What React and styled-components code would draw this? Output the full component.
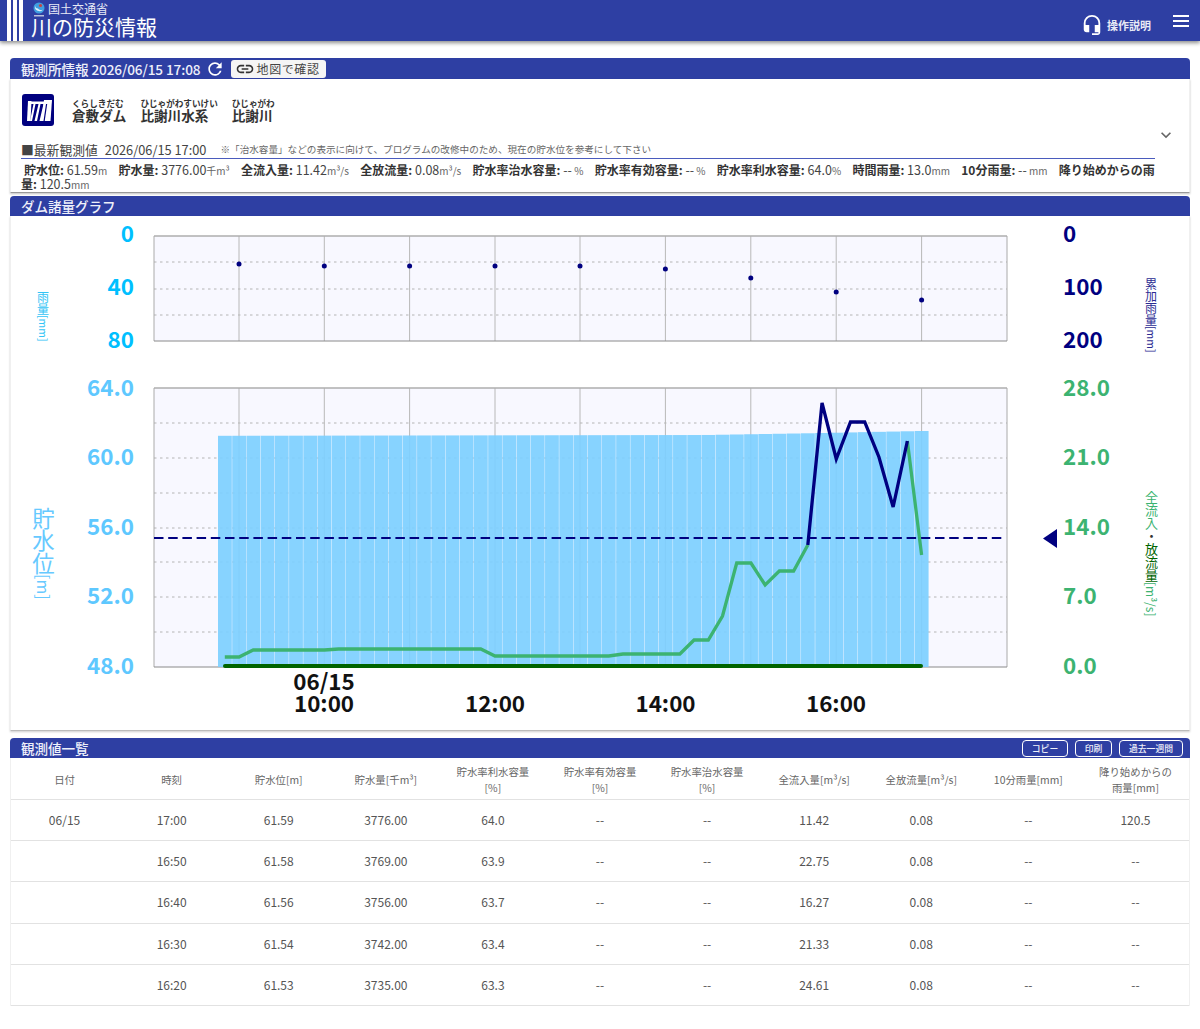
import React from "react";
import styled, { createGlobalStyle } from "styled-components";
import { MdHeadsetMic, MdRefresh, MdLink, MdExpandMore } from "react-icons/md";

const GlobalStyle = createGlobalStyle`
  html, body {
    margin: 0;
    padding: 0;
    background: #fff;
    height: 100%;
    overflow: hidden;
    font-family: "Noto Sans CJK JP", "Noto Sans", sans-serif;
  }
`;

const BLUE = "#2e3fa3";

const TopBar = styled.header`
  height: 41px;
  background: ${BLUE};
  box-shadow: 0 2px 4px rgba(0, 0, 0, 0.45);
  display: flex;
  align-items: stretch;
  color: #fff;
`;
const Stripes = styled.div`
  display: flex;
  gap: 2px;
  padding-left: 7px;
  span {
    width: 4px;
    background: #fff;
  }
`;
const Brand = styled.div`
  margin-left: 8px;
  display: flex;
  flex-direction: column;
  flex: 1;
`;
const Ministry = styled.div`
  display: flex;
  align-items: center;
  gap: 3px;
  height: 14px;
  padding: 2px 0 0 2px;
  font-size: 12px;
  line-height: 14px;
  color: #e8eaf6;
`;
const SiteName = styled.div`
  font-size: 21px;
  line-height: 21px;
  font-weight: 400;
`;
const HelpLink = styled.div`
  display: flex;
  align-items: center;
  gap: 4px;
  padding-top: 8px;
  font-size: 11px;
  font-weight: 700;
  color: #e8eaf6;
`;
const MenuButton = styled.div`
  display: flex;
  flex-direction: column;
  gap: 3.5px;
  width: 16px;
  margin: 15px 11px 0 22px;
  span {
    height: 1.5px;
    background: #fff;
  }
`;

const Main = styled.main`
  padding: 17px 10px 0;
`;
const SectionBar = styled.div`
  height: ${(p) => p.$height || 20}px;
  background: ${BLUE};
  border-radius: 4px 4px 0 0;
  display: flex;
  align-items: center;
  padding: 0 7px 0 11px;
  color: #fff;
`;
const BarTitle = styled.h2`
  margin: 0;
  font-size: 13.6px;
  font-weight: 500;
  letter-spacing: -0.1px;
  line-height: 20px;
  color: #eef0fa;
`;
const Refresh = styled(MdRefresh)`
  margin-left: 4px;
`;
const MapButton = styled.button`
  margin-left: 6px;
  height: 18px;
  width: 95px;
  border: 0;
  padding: 0 0 0 4px;
  border-radius: 3px;
  background: #f5f5f5;
  color: #444;
  display: flex;
  align-items: center;
  gap: 2px;
  font-family: inherit;
  font-size: 12px;
  letter-spacing: 0.6px;
`;
const BarActions = styled.div`
  margin-left: auto;
  display: flex;
  gap: 7px;
`;
const BarButton = styled.button`
  width: ${(p) => p.$w}px;
  height: 17px;
  padding: 0;
  background: transparent;
  border: 1px solid #fff;
  border-radius: 4px;
  color: #eef0fa;
  font-family: inherit;
  font-size: 8.8px;
  font-weight: 500;
  line-height: 15px;
`;
const Card = styled.section`
  background: #fff;
  border-left: 1px solid #f0f0f0;
  border-right: 1px solid #f0f0f0;
  box-sizing: border-box;
`;

const InfoCard = styled(Card)`
  height: 114px;
  margin-bottom: 3px;
  border-bottom: 1px solid #999;
  box-shadow: 0 1px 2px rgba(0, 0, 0, 0.25);
  display: flex;
`;
const InfoMain = styled.div`
  width: 1134px;
  margin-left: 10px;
  padding-top: 15px;
`;
const ChevronCol = styled.div`
  padding: 46px 0 0 1px;
  color: #666;
`;
const StationRow = styled.div`
  display: flex;
  align-items: flex-start;
  height: 32px;
  margin-bottom: 14px;
  padding-left: 1px;
`;
const Names = styled.div`
  display: flex;
  gap: 14px;
  margin-left: 18px;
  padding-top: 4px;
`;
const NameBlock = styled.div`
  display: flex;
  flex-direction: column;
  color: #333;
`;
const Ruby = styled.span`
  font-size: 8.6px;
  line-height: 10px;
  font-weight: 700;
  white-space: nowrap;
`;
const Name = styled.span`
  font-size: 13.6px;
  line-height: 15px;
  font-weight: 700;
  white-space: nowrap;
`;
const LatestRow = styled.div`
  height: 18px;
  border-bottom: 1px solid #4a5bbd;
  display: flex;
  align-items: center;
  font-size: 12.8px;
  color: #444;
  white-space: nowrap;
`;
const LatestTime = styled.span`
  margin-left: 7px;
`;
const Notice = styled.span`
  margin-left: 14px;
  font-size: 9.6px;
  color: #666;
`;
const Readings = styled.div`
  padding-top: 4px;
  font-size: 12.5px;
  line-height: 13.5px;
  color: #444;
`;
const Reading = styled.span`
  margin-right: 11.3px;
  &:first-child {
    margin-left: 3px;
  }
  b {
    color: #333;
    font-size: 12px;
    font-weight: 700;
    line-height: 0;
  }
  small {
    font-size: 10px;
    line-height: 0;
    color: #666;
  }
`;

const ChartCard = styled(Card)`
  height: 515px;
  margin-bottom: 7px;
  border-bottom: 1px solid #bbb;
  box-shadow: 0 1px 2px rgba(0, 0, 0, 0.2);
`;
const ChartSvg = styled.svg`
  display: block;
  margin-left: -1px;
`;
const AxisNum = styled.text`
  font-family: "Noto Sans CJK JP", sans-serif;
  font-size: 22.4px;
  font-weight: 700;
  dominant-baseline: central;
  fill: ${(p) => p.$color};
`;
const TimeLabel = styled.text`
  font-family: "Noto Sans CJK JP", sans-serif;
  font-size: 22.4px;
  font-weight: 700;
  text-anchor: middle;
  dominant-baseline: central;
  fill: #111;
`;
const AxisTitle = styled.text`
  font-family: "Noto Sans CJK JP", sans-serif;
  font-size: ${(p) => p.$size}px;
  writing-mode: vertical-rl;
  fill: ${(p) => p.$color};
`;

const Row = styled.div`
  display: grid;
  grid-template-columns: repeat(11, 1fr);
  align-items: center;
  height: ${(p) => (p.$head ? 41.5 : 41.4)}px;
  padding-top: ${(p) => (p.$head ? 3 : 0)}px;
  box-sizing: border-box;
  border-bottom: 1px solid #e2e2e2;
  text-align: center;
  font-size: ${(p) => (p.$head ? 10.4 : 12)}px;
  line-height: 16px;
  color: ${(p) => (p.$head ? "#666" : "#555")};
`;

const VLINES = [239, 324.3, 409.6, 495, 580, 665.4, 750.8, 836.2, 921.6];
const px = (i) => 224.8 + 14.22 * i;
const FLOW = [
  657, 657, 650, 650, 650, 650, 650, 650, 649, 649, 649, 649, 649, 649, 649, 649, 649, 649, 649, 656, 656, 656, 656,
  656, 656, 656, 656, 656, 654, 654, 654, 654, 654, 640, 640, 616, 563, 563, 585, 571, 571, 545, 403, 459, 422, 422,
  457, 507, 441, 555,
];
const RAIN = [264, 266, 266, 266, 266, 269, 278, 292, 300];

const levelTop = (x) => {
  if (x < 700) return 435.8 - ((x - 218) / 482) * 0.8;
  if (x < 800) return 435 - ((x - 700) / 100) * 1.7;
  return 433.3 - ((x - 800) / 129) * 2.6;
};
const toPoints = (from, to) =>
  FLOW.slice(from, to + 1)
    .map((y, i) => `${px(from + i)},${y}`)
    .join(" ");

function PlotFrame({ top, bottom, dashes }) {
  return (
    <g>
      <rect x="154" y={top} width="853" height={bottom - top} fill="#f8f8ff" />
      {dashes.map((y) => (
        <line key={y} x1="154" x2="1007" y1={y} y2={y} stroke="#b4b4b4" strokeDasharray="2.5 3.5" />
      ))}
      {VLINES.map((x) => (
        <line key={x} x1={x} x2={x} y1={top} y2={bottom} stroke="#b8b8b8" />
      ))}
      <line x1="154" x2="1007" y1={top} y2={top} stroke="#aeaeae" strokeWidth="1.5" />
      <line x1="154" x2="154" y1={top} y2={bottom} stroke="#aaa" />
      <line x1="1007" x2="1007" y1={top} y2={bottom} stroke="#aaa" />
      <line x1="154" x2="1007" y1={bottom} y2={bottom} stroke="#8a8a8a" />
    </g>
  );
}

function DamChart() {
  return (
    <ChartSvg width="1181" height="514" viewBox="10 216 1181 514">
      <PlotFrame top={236} bottom={341} dashes={[262, 289, 315]} />
      {RAIN.map((y, i) => (
        <circle key={i} cx={VLINES[i]} cy={y} r="2.5" fill="#000080" />
      ))}

      <PlotFrame top={388} bottom={667} dashes={[423, 458, 493, 528, 562, 597, 632]} />
      {FLOW.map((_, i) => {
        const x = 218 + 14.22 * i;
        const t = levelTop(x);
        return <rect key={i} x={x} y={t} width="13.8" height={667 - t} fill="#7dcfff" opacity="0.92" />;
      })}
      <line x1="154" x2="1003" y1="538" y2="538" stroke="#000080" strokeWidth="2" strokeDasharray="9.500 4.700" />
      <polyline points={toPoints(0, 41)} fill="none" stroke="#3cb371" strokeWidth="3.3" />
      <polyline points={toPoints(48, 49)} fill="none" stroke="#3cb371" strokeWidth="3.3" />
      <polyline points={toPoints(41, 48)} fill="none" stroke="#000080" strokeWidth="3.3" />
      <line x1="225" x2="921" y1="666" y2="666" stroke="#006400" strokeWidth="4" strokeLinecap="round" />
      <polygon points="1057,529 1057,548 1043,538.5" fill="#000080" />

      <g textAnchor="end">
        <AxisNum x="134" y="231.5" $color="#00bfff">0</AxisNum>
        <AxisNum x="134" y="284.5" $color="#00bfff">40</AxisNum>
        <AxisNum x="134" y="337.5" $color="#00bfff">80</AxisNum>
        {["64.0", "60.0", "56.0", "52.0", "48.0"].map((t, i) => (
          <AxisNum key={t} x="134" y={385.5 + i * 69.6} $color="#5ec8ff">
            {t}
          </AxisNum>
        ))}
      </g>
      <AxisNum x="1063" y="231.5" $color="#000080">0</AxisNum>
      <AxisNum x="1063" y="284.5" $color="#000080">100</AxisNum>
      <AxisNum x="1063" y="337.5" $color="#000080">200</AxisNum>
      {["28.0", "21.0", "14.0", "7.0", "0.0"].map((t, i) => (
        <AxisNum key={t} x="1063" y={385.5 + i * 69.6} $color="#3cb371">
          {t}
        </AxisNum>
      ))}

      <TimeLabel x="324" y="679.5">06/15</TimeLabel>
      <TimeLabel x="324" y="701.5">10:00</TimeLabel>
      <TimeLabel x="495" y="701.5">12:00</TimeLabel>
      <TimeLabel x="665.5" y="701.5">14:00</TimeLabel>
      <TimeLabel x="836" y="701.5">16:00</TimeLabel>

      <AxisTitle x="43" y="291" $size={12} $color="#33c4f5">
        雨量<tspan fontSize="10.5">[mm]</tspan>
      </AxisTitle>
      <AxisTitle x="1151" y="278" $size={12} $color="#2b2b93">
        累加雨量<tspan fontSize="10.5">[mm]</tspan>
      </AxisTitle>
      <AxisTitle x="43.5" y="507" $size={22.4} $color="#66c9ff">
        貯水位<tspan fontSize="16">[m]</tspan>
      </AxisTitle>
      <AxisTitle x="1151.5" y="491" $size={13} $color="#3cb371">
        全流入<tspan fill="#333">・</tspan>
        <tspan fill="#006400">放流量</tspan><tspan fontSize="12">[m³/s]</tspan>
      </AxisTitle>
    </ChartSvg>
  );
}

const READINGS = [
  ["貯水位:", "61.59", "m"],
  ["貯水量:", "3776.00", "千m³"],
  ["全流入量:", "11.42", "m³/s"],
  ["全放流量:", "0.08", "m³/s"],
  ["貯水率治水容量:", "--", " %"],
  ["貯水率有効容量:", "--", " %"],
  ["貯水率利水容量:", "64.0", "%"],
  ["時間雨量:", "13.0", "mm"],
  ["10分雨量:", "--", " mm"],
  ["降り始めからの雨量:", "120.5", "mm"],
];

const HEADERS = [
  ["日付"],
  ["時刻"],
  ["貯水位[m]"],
  ["貯水量[千m³]"],
  ["貯水率利水容量", "[%]"],
  ["貯水率有効容量", "[%]"],
  ["貯水率治水容量", "[%]"],
  ["全流入量[m³/s]"],
  ["全放流量[m³/s]"],
  ["10分雨量[mm]"],
  ["降り始めからの", "雨量[mm]"],
];

const ROWS = [
  ["06/15", "17:00", "61.59", "3776.00", "64.0", "--", "--", "11.42", "0.08", "--", "120.5"],
  ["", "16:50", "61.58", "3769.00", "63.9", "--", "--", "22.75", "0.08", "--", "--"],
  ["", "16:40", "61.56", "3756.00", "63.7", "--", "--", "16.27", "0.08", "--", "--"],
  ["", "16:30", "61.54", "3742.00", "63.4", "--", "--", "21.33", "0.08", "--", "--"],
  ["", "16:20", "61.53", "3735.00", "63.3", "--", "--", "24.61", "0.08", "--", "--"],
];

function MinistryMark() {
  return (
    <svg width="12" height="15" viewBox="0 0 12 15">
      <circle cx="6" cy="6" r="5.5" fill="#3f9fe0" />
      <path d="M2 4a4.500 4.500 0 0 0 8 3.500a3.500 3.500 0 0 1-5-1a3 3 0 0 1-3-2.500z" fill="#dff1fb" />
      <circle cx="7.500" cy="3.500" r="1.600" fill="#c9453f" />
      <rect x="1" y="13" width="10" height="1.500" fill="#b9c0da" />
    </svg>
  );
}

function DamLogo() {
  return (
    <svg width="32" height="32" viewBox="0 0 32 32">
      <rect width="32" height="32" rx="3" fill="#00007f" />
      <path d="M6 7h3.500L8.500 27H5z" fill="#fff" />
      <path d="M9 7.500h14v2.500H9z" fill="#fff" />
      <path d="M11.500 10h2L10 27H8zM16.500 10h2L15 27h-2.500zM21.500 10h2L20 27h-2.500z" fill="#fff" />
      <path d="M22 6h8l-1.500 21H19.500z" fill="#fff" />
      <path d="M24 10l-2.500 17h1.200L25.200 10z" fill="#00007f" />
    </svg>
  );
}

export default function App() {
  return (
    <>
      <GlobalStyle />
      <TopBar>
        <Stripes>
          <span />
          <span />
          <span />
        </Stripes>
        <Brand>
          <Ministry>
            <MinistryMark />
            国土交通省
          </Ministry>
          <SiteName>川の防災情報</SiteName>
        </Brand>
        <HelpLink>
          <MdHeadsetMic size={22} color="#fff" />
          操作説明
        </HelpLink>
        <MenuButton>
          <span />
          <span />
          <span />
        </MenuButton>
      </TopBar>

      <Main>
        <SectionBar $height={21}>
          <BarTitle>観測所情報 2026/06/15 17:08</BarTitle>
          <Refresh size={20} />
          <MapButton>
            <MdLink size={20} color="#333" />
            地図で確認
          </MapButton>
        </SectionBar>
        <InfoCard>
          <InfoMain>
            <StationRow>
              <DamLogo />
              <Names>
                <NameBlock>
                  <Ruby>くらしきだむ</Ruby>
                  <Name>倉敷ダム</Name>
                </NameBlock>
                <NameBlock>
                  <Ruby>ひじゃがわすいけい</Ruby>
                  <Name>比謝川水系</Name>
                </NameBlock>
                <NameBlock>
                  <Ruby>ひじゃがわ</Ruby>
                  <Name>比謝川</Name>
                </NameBlock>
              </Names>
            </StationRow>
            <LatestRow>
              ■最新観測値
              <LatestTime>2026/06/15 17:00</LatestTime>
              <Notice>※「治水容量」などの表示に向けて、プログラムの改修中のため、現在の貯水位を参考にして下さい</Notice>
            </LatestRow>
            <Readings>
              {READINGS.map(([label, value, unit]) => (
                <Reading key={label}>
                  <b>{label}</b> {value}
                  <small>{unit}</small>
                </Reading>
              ))}
            </Readings>
          </InfoMain>
          <ChevronCol>
            <MdExpandMore size={20} />
          </ChevronCol>
        </InfoCard>

        <SectionBar>
          <BarTitle>ダム諸量グラフ</BarTitle>
        </SectionBar>
        <ChartCard>
          <DamChart />
        </ChartCard>

        <SectionBar>
          <BarTitle>観測値一覧</BarTitle>
          <BarActions>
            <BarButton $w={46}>コピー</BarButton>
            <BarButton $w={37}>印刷</BarButton>
            <BarButton $w={64}>過去一週間</BarButton>
          </BarActions>
        </SectionBar>
        <Card>
          <Row $head>
            {HEADERS.map((lines) => (
              <div key={lines.join("")}>
                {lines.map((l) => (
                  <div key={l}>{l}</div>
                ))}
              </div>
            ))}
          </Row>
          {ROWS.map((cells) => (
            <Row key={cells[1]}>
              {cells.map((c, i) => (
                <div key={i}>{c}</div>
              ))}
            </Row>
          ))}
        </Card>
      </Main>
    </>
  );
}
